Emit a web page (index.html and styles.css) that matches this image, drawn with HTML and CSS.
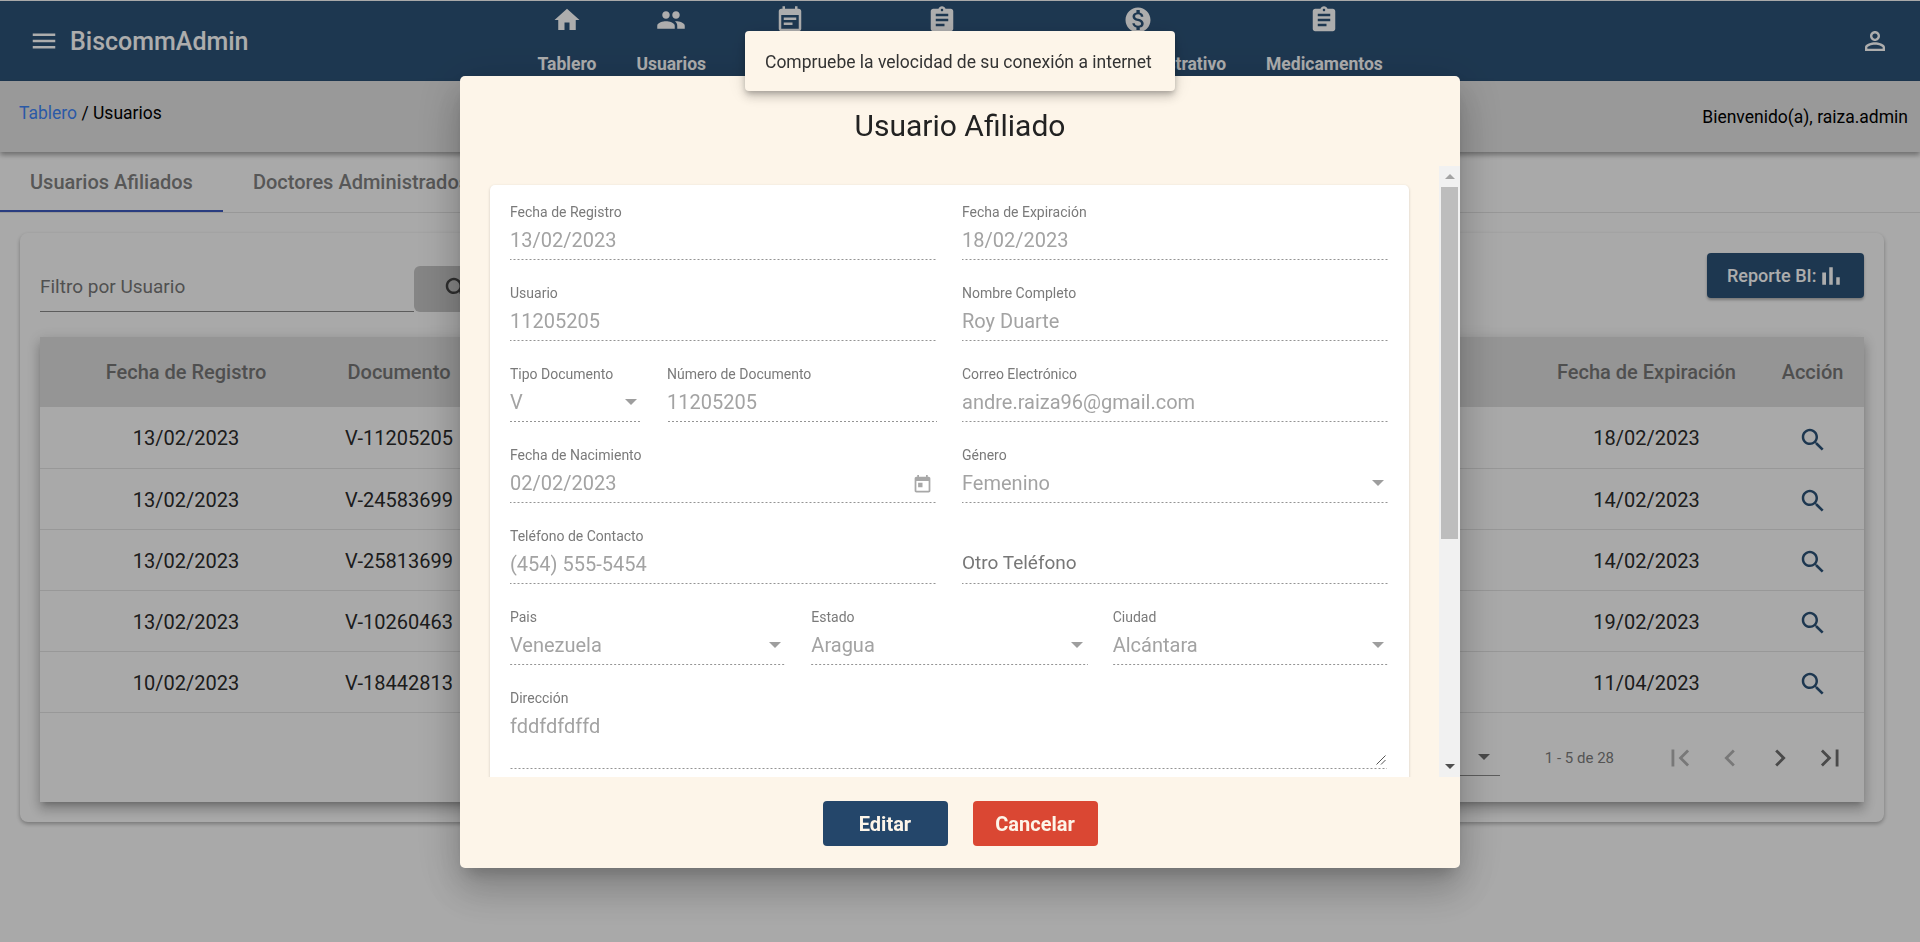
FILE: index.html
```html
<!DOCTYPE html>
<html lang="es">
<head>
  <meta charset="UTF-8" />
  <meta name="viewport" content="width=device-width, initial-scale=1.0"/>
  <title>BiscommAdmin</title>
  <link rel="stylesheet" href="styles.css">
</head>

<body>

<svg class="sprite" xmlns="http://www.w3.org/2000/svg">
  <symbol id="i-menu" viewBox="0 0 24 24"><path d="M3 18h18v-2H3v2zm0-5h18v-2H3v2zm0-7v2h18V6H3z"/></symbol>
  <symbol id="i-home" viewBox="0 0 24 24"><path d="M10 20v-6h4v6h5v-8h3L12 3 2 12h3v8z"/></symbol>
  <symbol id="i-people" viewBox="0 0 24 24"><path d="M16 11c1.66 0 2.99-1.34 2.99-3S17.66 5 16 5c-1.66 0-3 1.34-3 3s1.34 3 3 3zm-8 0c1.66 0 2.99-1.34 2.99-3S9.66 5 8 5C6.34 5 5 6.34 5 8s1.34 3 3 3zm0 2c-2.33 0-7 1.17-7 3.5V19h14v-2.5c0-2.33-4.67-3.5-7-3.5zm8 0c-.29 0-.62.02-.97.05 1.16.84 1.97 1.97 1.97 3.45V19h6v-2.5c0-2.33-4.67-3.5-7-3.5z"/></symbol>
  <symbol id="i-event" viewBox="0 0 24 24"><path d="M17 10H7v2h10v-2zm2-7h-1V1h-2v2H8V1H6v2H5c-1.11 0-1.99.9-1.99 2L3 19c0 1.1.89 2 2 2h14c1.1 0 2-.9 2-2V5c0-1.1-.9-2-2-2zm0 16H5V8h14v11zm-5-5H7v2h7v-2z"/></symbol>
  <symbol id="i-assignment" viewBox="0 0 24 24"><path d="M19 3h-4.18C14.4 1.84 13.3 1 12 1c-1.3 0-2.4.84-2.82 2H5c-1.1 0-2 .9-2 2v14c0 1.1.9 2 2 2h14c1.1 0 2-.9 2-2V5c0-1.1-.9-2-2-2zm-7 0c.55 0 1 .45 1 1s-.45 1-1 1-1-.45-1-1 .45-1 1-1zm2 14H7v-2h7v2zm3-4H7v-2h10v2zm0-4H7V7h10v2z"/></symbol>
  <symbol id="i-money" viewBox="0 0 24 24"><path d="M12 2C6.48 2 2 6.48 2 12s4.48 10 10 10 10-4.48 10-10S17.52 2 12 2zm1.41 16.09V20h-2.67v-1.93c-1.71-.36-3.16-1.46-3.27-3.4h1.96c.1 1.05.82 1.87 2.65 1.87 1.96 0 2.4-.98 2.4-1.59 0-.83-.44-1.61-2.67-2.14-2.48-.6-4.18-1.62-4.18-3.67 0-1.72 1.39-2.84 3.11-3.21V4h2.67v1.95c1.86.45 2.79 1.86 2.85 3.39H14.3c-.05-1.11-.64-1.87-2.22-1.87-1.5 0-2.4.68-2.4 1.64 0 .84.65 1.39 2.67 1.91s4.18 1.39 4.18 3.91c-.01 1.83-1.38 2.83-3.12 3.16z"/></symbol>
  <symbol id="i-person" viewBox="0 0 24 24"><path d="M12 5.9c1.16 0 2.1.94 2.1 2.1s-.94 2.1-2.1 2.1S9.9 9.16 9.9 8s.94-2.1 2.1-2.1m0 9c2.97 0 6.1 1.46 6.1 2.1v1.1H5.9V17c0-.64 3.13-2.1 6.1-2.1M12 4C9.79 4 8 5.79 8 8s1.79 4 4 4 4-1.79 4-4-1.79-4-4-4zm0 9c-2.67 0-8 1.34-8 4v3h16v-3c0-2.66-5.33-4-8-4z"/></symbol>
  <symbol id="i-search" viewBox="0 0 24 24"><path d="M15.5 14h-.79l-.28-.27C15.41 12.59 16 11.11 16 9.5 16 5.91 13.09 3 9.5 3S3 5.91 3 9.5 5.91 16 9.5 16c1.61 0 3.09-.59 4.23-1.57l.27.28v.79l5 4.99L20.49 19l-4.99-5zm-6 0C7.01 14 5 11.99 5 9.5S7.01 5 9.5 5 14 7.01 14 9.5 11.99 14 9.5 14z"/></symbol>
  <symbol id="i-bars" viewBox="0 0 24 24"><path d="M5 9.2h3V19H5zM10.6 5h2.8v14h-2.8zm5.6 8H19v6h-2.8z"/></symbol>
  <symbol id="i-first" viewBox="0 0 24 24"><path d="M18.41 16.59L13.82 12l4.59-4.59L17 6l-6 6 6 6zM6 6h2v12H6z"/></symbol>
  <symbol id="i-prev" viewBox="0 0 24 24"><path d="M15.41 7.41L14 6l-6 6 6 6 1.41-1.41L10.83 12z"/></symbol>
  <symbol id="i-next" viewBox="0 0 24 24"><path d="M10 6L8.59 7.41 13.17 12l-4.58 4.59L10 18l6-6z"/></symbol>
  <symbol id="i-last" viewBox="0 0 24 24"><path d="M5.59 7.41L10.18 12l-4.59 4.59L7 18l6-6-6-6zM16 6h2v12h-2z"/></symbol>
  <symbol id="i-today" viewBox="0 0 24 24"><path d="M19 3h-1V1h-2v2H8V1H6v2H5c-1.11 0-1.99.9-1.99 2L3 19c0 1.1.89 2 2 2h14c1.1 0 2-.9 2-2V5c0-1.1-.9-2-2-2zm0 16H5V8h14v11zM7 10h5v5H7z"/></symbol>
</svg>

<header class="topbar">
  <svg class="icon menu-icon"><use href="#i-menu"/></svg>
  <span class="brand">BiscommAdmin</span>
  <nav class="topnav">
    <a class="nav-item"><svg class="icon"><use href="#i-home"/></svg><span>Tablero</span></a>
    <a class="nav-item"><svg class="icon"><use href="#i-people"/></svg><span>Usuarios</span></a>
    <a class="nav-item"><svg class="icon"><use href="#i-event"/></svg><span class="nav-w3"></span></a>
    <a class="nav-item"><svg class="icon"><use href="#i-assignment"/></svg><span class="nav-w4"></span></a>
    <a class="nav-item"><svg class="icon"><use href="#i-money"/></svg><span class="nav-w5">Administrativo</span></a>
    <a class="nav-item"><svg class="icon"><use href="#i-assignment"/></svg><span>Medicamentos</span></a>
  </nav>
  <svg class="icon user-icon"><use href="#i-person"/></svg>
</header>

<div class="crumbs">
  <div class="crumb-path"><a class="crumb-link">Tablero</a> / Usuarios</div>
  <div class="crumb-user">Bienvenido(a), raiza.admin</div>
</div>

<div class="tabs">
  <div class="tab tab-active">Usuarios Afiliados</div>
  <div class="tab">Doctores Administrados</div>
</div>

<section class="panel">
  <div class="toolbar">
    <div class="filter">
      <div class="filter-input">Filtro por Usuario</div>
      <button class="filter-btn"><svg class="icon"><use href="#i-search"/></svg></button>
    </div>
    <button class="report-btn">Reporte BI:<svg class="icon"><use href="#i-bars"/></svg></button>
  </div>

  <div class="table-wrap">
    <table class="users">
      <colgroup>
        <col class="col-reg"><col class="col-doc"><col class="col-rest"><col class="col-exp"><col class="col-act">
      </colgroup>
      <thead>
        <tr><th>Fecha de Registro</th><th>Documento</th><th></th><th>Fecha de Expiración</th><th>Acción</th></tr>
      </thead>
      <tbody>
        <tr><td>13/02/2023</td><td>V-11205205</td><td></td><td>18/02/2023</td><td><svg class="icon search-icon"><use href="#i-search"/></svg></td></tr>
        <tr><td>13/02/2023</td><td>V-24583699</td><td></td><td>14/02/2023</td><td><svg class="icon search-icon"><use href="#i-search"/></svg></td></tr>
        <tr><td>13/02/2023</td><td>V-25813699</td><td></td><td>14/02/2023</td><td><svg class="icon search-icon"><use href="#i-search"/></svg></td></tr>
        <tr><td>13/02/2023</td><td>V-10260463</td><td></td><td>19/02/2023</td><td><svg class="icon search-icon"><use href="#i-search"/></svg></td></tr>
        <tr><td>10/02/2023</td><td>V-18442813</td><td></td><td>11/04/2023</td><td><svg class="icon search-icon"><use href="#i-search"/></svg></td></tr>
      </tbody>
    </table>
    <div class="paginator">
      <div class="page-size"><i class="arrow arrow-dark"></i></div>
      <div class="page-range">1 - 5 de 28</div>
      <button class="page-btn off"><svg class="icon"><use href="#i-first"/></svg></button>
      <button class="page-btn off"><svg class="icon"><use href="#i-prev"/></svg></button>
      <button class="page-btn"><svg class="icon"><use href="#i-next"/></svg></button>
      <button class="page-btn"><svg class="icon"><use href="#i-last"/></svg></button>
    </div>
  </div>
</section>

<div class="backdrop"></div>

<div class="modal">
  <h2 class="modal-title">Usuario Afiliado</h2>

  <div class="modal-body">
    <div class="form-area">
      <form class="form-card">
        <div class="row">
          <div class="field"><label>Fecha de Registro</label><div class="value">13/02/2023</div></div>
          <div class="field"><label>Fecha de Expiración</label><div class="value">18/02/2023</div></div>
        </div>
        <div class="row">
          <div class="field"><label>Usuario</label><div class="value">11205205</div></div>
          <div class="field"><label>Nombre Completo</label><div class="value">Roy Duarte</div></div>
        </div>
        <div class="row">
          <div class="row-half">
            <div class="field field-doc-type"><label>Tipo Documento</label><div class="value">V<i class="arrow"></i></div></div>
            <div class="field"><label>Número de Documento</label><div class="value">11205205</div></div>
          </div>
          <div class="field"><label>Correo Electrónico</label><div class="value">andre.raiza96@gmail.com</div></div>
        </div>
        <div class="row">
          <div class="field"><label>Fecha de Nacimiento</label><div class="value">02/02/2023<svg class="icon calendar-icon"><use href="#i-today"/></svg></div></div>
          <div class="field"><label>Género</label><div class="value">Femenino<i class="arrow"></i></div></div>
        </div>
        <div class="row">
          <div class="field"><label>Teléfono de Contacto</label><div class="value">(454) 555-5454</div></div>
          <div class="field"><label></label><div class="value value-empty">Otro Teléfono</div></div>
        </div>
        <div class="row">
          <div class="field"><label>Pais</label><div class="value">Venezuela<i class="arrow"></i></div></div>
          <div class="field"><label>Estado</label><div class="value">Aragua<i class="arrow"></i></div></div>
          <div class="field"><label>Ciudad</label><div class="value">Alcántara<i class="arrow"></i></div></div>
        </div>
        <div class="row">
          <div class="field field-area">
            <label>Dirección</label>
            <div class="value">fddfdfdffd</div>
            <svg class="resize-grip" viewBox="0 0 10 10"><path d="M9.5 .5L.5 9.5M9.5 5L5 9.5"/></svg>
          </div>
        </div>
      </form>
    </div>
    <div class="scrollbar">
      <i class="scroll-up"></i>
      <div class="scroll-thumb"></div>
      <i class="scroll-down"></i>
    </div>
  </div>

  <div class="modal-actions">
    <button class="btn btn-edit">Editar</button>
    <button class="btn btn-cancel">Cancelar</button>
  </div>
</div>

<div class="snackbar">Compruebe la velocidad de su conexión a internet</div>

</body>
</html>
```

FILE: styles.css
```css
* {
  box-sizing: border-box;
}

html, body {
  height: 100%;
}

body {
  margin: 0;
  padding-top: 1px;
  overflow: hidden;
  font-family: Roboto, "Liberation Sans", sans-serif;
  background-color: #fafafa;
  color: #2b2b2b;
}

button {
  font-family: inherit;
  border: none;
  cursor: pointer;
}

.sprite {
  display: none;
}

.icon {
  display: block;
  width: 30px;
  height: 30px;
  fill: currentColor;
  flex: none;
}

/* top bar */
.topbar {
  display: flex;
  align-items: center;
  height: 80px;
  padding: 0 30px 0 29px;
  background-color: #2c5277;
  color: #fff;
}

.brand {
  margin-left: 11px;
  font-size: 25px;
  font-weight: 500;
}

.topnav {
  display: flex;
  gap: 40px;
  margin-left: 289px;
  align-self: flex-start;
}

.nav-item {
  display: flex;
  flex-direction: column;
  align-items: center;
  padding-top: 4px;
  font-size: 17.5px;
  font-weight: 700;
  cursor: pointer;
}

.nav-item span {
  margin-top: 18px;
  line-height: 22px;
  white-space: nowrap;
}

.nav-w3 {
  min-width: 88px;
}

.nav-w4 {
  min-width: 136px;
}

.nav-w5 {
  min-width: 176px;
  text-align: right;
}

.user-icon {
  margin-left: auto;
}

/* breadcrumb */
.crumbs {
  display: flex;
  justify-content: space-between;
  height: 71px;
  padding: 20px 12px 0 19px;
  background-color: #e2e2e2;
  box-shadow: 0 3px 5px rgba(0,0,0,.35);
  font-size: 17.5px;
  line-height: 24px;
  color: #000;
  position: relative;
}

.crumb-link {
  color: #3f85f5;
}

.crumb-user {
  margin-top: 4px;
}

/* tabs */
.tabs {
  display: flex;
  height: 61px;
  border-bottom: 1px solid #e0e0e0;
}

.tab {
  height: 60px;
  padding: 0 30px;
  font-size: 20px;
  font-weight: 500;
  line-height: 60px;
  color: #808080;
  white-space: nowrap;
}

.tab-active {
  border-bottom: 2px solid #3f5bbd;
}

/* panel */
.panel {
  margin: 20px 36px 0 20px;
  padding: 20px;
  background-color: #fafafa;
  border-radius: 8px;
  box-shadow: 0 2px 4px rgba(0,0,0,.3);
}

.toolbar {
  display: flex;
  justify-content: space-between;
  align-items: flex-start;
  height: 84px;
}

.filter {
  display: flex;
  margin-top: 13px;
}

.filter-input {
  width: 374px;
  height: 46px;
  padding-top: 9px;
  border-bottom: 1px solid #888;
  font-size: 19px;
  line-height: 24px;
  color: #777;
}

.filter-btn {
  width: 90px;
  height: 46px;
  padding-left: 28px;
  background-color: #c4c4c4;
  border-radius: 6px;
  color: #444;
}

.report-btn {
  display: flex;
  align-items: center;
  width: 157px;
  height: 45px;
  padding: 0 20px;
  background-color: #2c5277;
  border-radius: 4px;
  color: #fff;
  font-size: 18px;
  font-weight: 500;
  white-space: nowrap;
  box-shadow: 0 2px 3px rgba(0,0,0,.3);
}

.table-wrap {
  background-color: #fafafa;
  box-shadow: 0 5px 5px -3px rgba(0,0,0,.2), 0 8px 10px 1px rgba(0,0,0,.14), 0 3px 14px 2px rgba(0,0,0,.12);
}

.users {
  width: 100%;
  table-layout: fixed;
  border-collapse: collapse;
}

.col-reg {
  width: 292px;
}

.col-doc {
  width: 134px;
}

.col-exp {
  width: 229px;
}

.col-act {
  width: 103px;
}

.users th {
  height: 70px;
  padding-top: 1px;
  background-color: #dcdcdc;
  font-size: 20px;
  font-weight: 500;
  color: #757575;
  text-align: center;
  white-space: nowrap;
}

.users td {
  height: 61px;
  padding: 2px 0 0;
  border-bottom: 1px solid #e0e0e0;
  font-size: 20px;
  text-align: center;
  white-space: nowrap;
}

.search-icon {
  margin: 3px auto 0;
  color: #2c5277;
}

/* pagination */
.paginator {
  display: flex;
  justify-content: flex-end;
  align-items: center;
  height: 89px;
  padding: 1px 9px 0 0;
}

.page-size {
  display: flex;
  align-items: center;
  justify-content: flex-end;
  width: 120px;
  height: 36px;
  padding: 0 5px 0 0;
  border-bottom: 1px solid #8a8a8a;
}

.page-range {
  margin: 0 41px 0 45px;
  font-size: 15px;
  color: #7c7c7c;
}

.page-btn {
  display: flex;
  justify-content: center;
  align-items: center;
  width: 50px;
  height: 50px;
  padding: 0;
  background: none;
  color: #6d6d6d;
}

.page-btn .icon {
  width: 34px;
  height: 34px;
}

.page-btn.off {
  color: #b2b2b2;
}

/* backdrop + dialog */
.backdrop {
  position: fixed;
  inset: 0;
  background: rgba(0,0,0,.32);
}

.modal {
  position: fixed;
  top: 76px;
  left: 460px;
  display: flex;
  flex-direction: column;
  width: 1000px;
  height: 792px;
  background-color: #fdf5e9;
  border-radius: 5px;
  box-shadow: 0 11px 15px -7px rgba(0,0,0,.2), 0 24px 38px 3px rgba(0,0,0,.14), 0 9px 46px 8px rgba(0,0,0,.12);
}

.modal-title {
  margin: 0;
  height: 90px;
  padding-top: 30px;
  font-size: 30px;
  font-weight: 400;
  line-height: 40px;
  color: #222;
  text-align: center;
}

.modal-body {
  display: flex;
  height: 611px;
}

.form-area {
  flex: 1;
  padding: 19px 30px 0;
  overflow: hidden;
}

.form-card {
  display: flex;
  flex-direction: column;
  gap: 24px;
  padding: 18px 20px 40px;
  background-color: #fff;
  border-radius: 5px;
  box-shadow: 0 1px 3px rgba(0,0,0,.18);
}

.row, .row-half {
  display: flex;
  gap: 25px;
}

.row-half {
  flex: 1 1 0;
  min-width: 0;
}

.field {
  display: flex;
  flex-direction: column;
  flex: 1 1 0;
  min-width: 0;
  height: 57px;
  background-image: linear-gradient(to right, rgba(0,0,0,.42) 0%, rgba(0,0,0,.42) 50%, transparent 0%);
  background-size: 4px 1px;
  background-repeat: repeat-x;
  background-position: bottom;
}

.field-doc-type {
  flex: 0 0 132px;
}

.field label {
  height: 18px;
  font-size: 14px;
  line-height: 18px;
  color: #7a7a7a;
}

.value {
  display: flex;
  align-items: center;
  justify-content: space-between;
  height: 26px;
  margin-top: 6px;
  font-size: 20px;
  line-height: 26px;
  color: #a3a3a3;
}

.value-empty {
  margin-top: 5px;
  font-size: 19px;
  color: #777;
}

.arrow {
  flex: none;
  width: 0;
  height: 0;
  margin-right: 5px;
  border-left: 6px solid transparent;
  border-right: 6px solid transparent;
  border-top: 6px solid #9e9e9e;
}

.arrow-dark {
  border-top-color: #6d6d6d;
  margin-right: 5px;
}

.calendar-icon {
  width: 21px;
  height: 21px;
  margin: 2px 4px 0 0;
  color: #a8a8a8;
}

.field-area {
  position: relative;
  height: 80px;
  margin-right: 2px;
}

.resize-grip {
  position: absolute;
  right: 1px;
  bottom: 4px;
  width: 10px;
  height: 10px;
  fill: none;
  stroke: #555;
  stroke-width: 1;
}

.scrollbar {
  display: flex;
  flex-direction: column;
  align-items: center;
  flex: none;
  width: 21px;
  background-color: #f1f1f1;
}

.scroll-up, .scroll-down {
  flex: none;
  width: 0;
  height: 0;
  border-left: 5px solid transparent;
  border-right: 5px solid transparent;
}

.scroll-up {
  margin-top: 8px;
  border-bottom: 5px solid #a3a3a3;
}

.scroll-thumb {
  width: 17px;
  height: 352px;
  margin-top: 8px;
  background-color: #bdbdbd;
}

.scroll-down {
  margin-top: auto;
  margin-bottom: 8px;
  border-top: 5px solid #505050;
}

.modal-actions {
  display: flex;
  justify-content: center;
  gap: 25px;
  padding-top: 24px;
}

.btn {
  width: 125px;
  height: 45px;
  border-radius: 4px;
  color: #fdf5e9;
  font-size: 20px;
  font-weight: 700;
}

.btn-edit {
  background-color: #24466a;
}

.btn-cancel {
  background-color: #da4733;
}

/* toast */
.snackbar {
  position: fixed;
  top: 31px;
  left: 745px;
  width: 430px;
  height: 60px;
  padding: 1px 20px 0;
  background-color: #fdf5e9;
  border-radius: 4px;
  box-shadow: 0 3px 5px -1px rgba(0,0,0,.2), 0 6px 10px 0 rgba(0,0,0,.14), 0 1px 18px 0 rgba(0,0,0,.12);
  font-size: 17.5px;
  line-height: 60px;
  color: #333;
  white-space: nowrap;
}
```
